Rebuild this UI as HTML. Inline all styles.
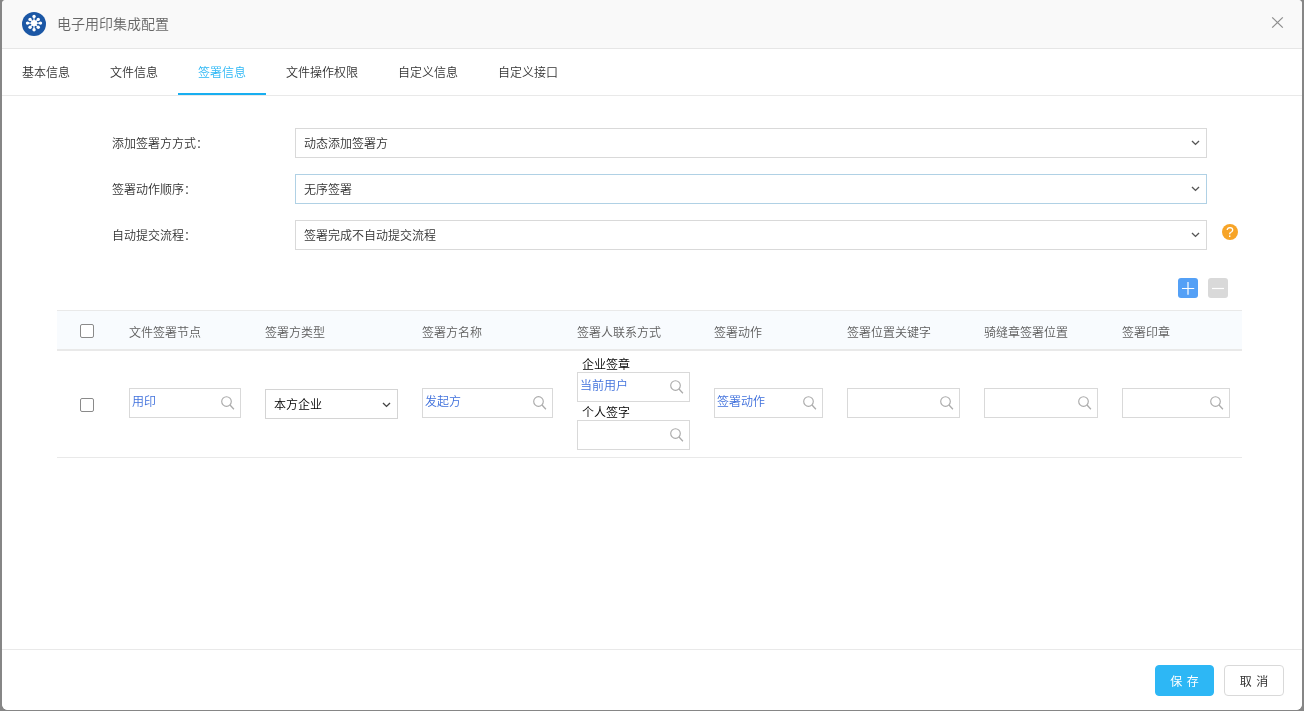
<!DOCTYPE html>
<html lang="zh-CN">
<head>
<meta charset="utf-8">
<title>电子用印集成配置</title>
<style>
*{box-sizing:border-box;margin:0;padding:0}
html,body{width:1304px;height:711px;overflow:hidden}
body{background:#868686;font-family:"Liberation Sans","Noto Sans CJK SC",sans-serif;font-size:12px;color:#333;position:relative;font-weight:350}
.dialog{will-change:transform;position:absolute;left:2px;top:0;width:1300px;height:710px;background:#fff;border-radius:4px 4px 6px 6px;overflow:hidden}
.hd{position:absolute;left:0;top:0;width:1300px;height:49px;background:#f9f9f9;border-bottom:1px solid #e6e6e6}
.hd .logo{position:absolute;left:20px;top:12px;width:24px;height:24px}
.hd .title{position:absolute;left:55px;top:0;height:48px;line-height:48px;font-size:14px;color:#666}
.hd .close{position:absolute;left:1268.5px;top:16.3px;width:13px;height:13px}
.tabs{position:absolute;left:0;top:49px;width:1300px;height:47px;border-bottom:1px solid #e9e9e9;display:flex}
.tab{height:46px;line-height:48px;padding:0 20px;color:#333;font-size:12px;position:relative;white-space:nowrap}
.tab.on{color:#2db7f5}
.tab.on:after{content:"";position:absolute;left:0;right:0;bottom:0;height:2px;background:#18aef0}
.frow{position:absolute;left:0;width:1300px;height:30px}
.frow label{position:absolute;left:110px;top:0;line-height:32px;height:30px;color:#333}
.sel{position:absolute;left:293px;top:0;width:912px;height:30px;border:1px solid #d9d9d9;background:#fff;line-height:30px;padding-left:8px;color:#333;overflow:hidden}
.sel.hl{border-color:#b0d1e5}
.chev{position:absolute;width:9px;height:6px}
.sel .chev{right:6.2px;top:11px}
.help{position:absolute;left:1220px;top:224px;width:16px;height:16px;border-radius:50%;background:#f7a427;color:#fff;font-size:14px;font-weight:400;text-align:center;line-height:16px}
.btn-sq{position:absolute;top:278px;width:20px;height:20px;border-radius:3px}
.btn-sq svg{display:block}
table.grid{position:absolute;left:55px;top:310px;width:1185px;border-collapse:separate;border-spacing:0;table-layout:fixed}
table.grid th{height:41px;background:#f8fbfe;border-top:1px solid #e9e9e9;border-bottom:2px solid #e9e9e9;text-align:left;font-weight:inherit;color:#5e5e5e;padding:2px 12px 0;white-space:nowrap}
table.grid td{height:107px;border-bottom:1px solid #e9e9e9;padding:0 12px;vertical-align:middle}
.cb{display:block;width:14px;height:14px;border:1px solid #8a8a8a;border-radius:2px;background:#fff;margin:0 auto}
td .cb{position:relative;top:1px}
.ipt{position:relative;top:-1px;height:30px;border:1px solid #d9d9d9;background:#fff;line-height:27px;padding-left:2px;color:#3f70dc}
.ipt svg{position:absolute;right:5px;top:7px}
.sel2{position:relative;height:30px;border:1px solid #d4d4d4;background:#fff;line-height:31px;padding-left:8px;color:#000;overflow:hidden}
.sel2 .chev{right:6px;top:11.5px}
.sub{color:#000;line-height:22px;padding-left:5px;height:18px}
.stack{position:relative;top:-2px}
.stack .ipt{top:0}
.ft{position:absolute;left:0;top:649px;width:1300px;height:61px;border-top:1px solid #e9e9e9;background:#fff}
.btn{position:absolute;top:15px;height:31px;width:60px;border-radius:4px;text-align:center;line-height:33px;font-size:12px;overflow:hidden;font-weight:400;word-spacing:1px}
.btn.pri{left:1153px;width:59px;background:#2db7f5;border:1px solid #2db7f5;color:#fff}
.btn.def{left:1222px;background:#fff;border:1px solid #d9d9d9;color:#333}
</style>
</head>
<body>
<div class="dialog">
  <div class="hd">
    <svg class="logo" viewBox="0 0 24 24">
      <circle cx="12" cy="12" r="12" fill="#1b57a5"/>
      <g stroke="#fff" stroke-width="1.1">
        <line x1="12" y1="4.5" x2="12" y2="17.7"/><line x1="5.5" y1="11.1" x2="18.5" y2="11.1"/>
        <line x1="8" y1="7.4" x2="16.2" y2="15.2"/><line x1="16.2" y1="7.4" x2="8" y2="15.2"/>
      </g>
      <g fill="#fff">
        <circle cx="12.05" cy="11.1" r="3.1"/>
        <circle cx="12.05" cy="4.4" r="1.7"/><circle cx="12.05" cy="17.7" r="1.7"/>
        <circle cx="5.5" cy="11.1" r="1.7"/><circle cx="18.5" cy="11.1" r="1.7"/>
        <circle cx="8.05" cy="7.4" r="1.7"/><circle cx="16.25" cy="7.4" r="1.7"/>
        <circle cx="8.05" cy="15.25" r="1.7"/><circle cx="16.25" cy="15.25" r="1.7"/>
      </g>
    </svg>
    <div class="title">电子用印集成配置</div>
    <svg class="close" viewBox="0 0 13 13"><path d="M1.2 1.4 L11.8 11.6 M11.8 1.4 L1.2 11.6" stroke="#8f8f8f" stroke-width="1.3" fill="none"/></svg>
  </div>
  <div class="tabs">
    <div class="tab">基本信息</div>
    <div class="tab">文件信息</div>
    <div class="tab on">签署信息</div>
    <div class="tab">文件操作权限</div>
    <div class="tab">自定义信息</div>
    <div class="tab">自定义接口</div>
  </div>

  <div class="frow" style="top:128px">
    <label>添加签署方方式：</label>
    <div class="sel">动态添加签署方<svg class="chev" viewBox="0 0 9 6"><path d="M1 1.1 L4.5 4.4 L8 1.1" stroke="#555" stroke-width="1.4" fill="none"/></svg></div>
  </div>
  <div class="frow" style="top:174px">
    <label>签署动作顺序：</label>
    <div class="sel hl">无序签署<svg class="chev" viewBox="0 0 9 6"><path d="M1 1.1 L4.5 4.4 L8 1.1" stroke="#555" stroke-width="1.4" fill="none"/></svg></div>
  </div>
  <div class="frow" style="top:220px">
    <label>自动提交流程：</label>
    <div class="sel">签署完成不自动提交流程<svg class="chev" viewBox="0 0 9 6"><path d="M1 1.1 L4.5 4.4 L8 1.1" stroke="#555" stroke-width="1.4" fill="none"/></svg></div>
  </div>
  <div class="help">?</div>

  <div class="btn-sq" style="left:1176px;background:#54a0f6"><svg width="20" height="20" viewBox="0 0 20 20"><path d="M10 4 V16.8 M4 10.5 H16.2" stroke="#fff" stroke-width="1.2" fill="none"/></svg></div>
  <div class="btn-sq" style="left:1206px;background:#d9d9d9"><svg width="20" height="20" viewBox="0 0 20 20"><path d="M4 10.5 H16" stroke="#fff" stroke-width="1.2" fill="none"/></svg></div>

  <table class="grid">
    <colgroup><col style="width:60px"><col style="width:136px"><col style="width:157px"><col style="width:155px"><col style="width:137px"><col style="width:133px"><col style="width:137px"><col style="width:138px"><col style="width:132px"></colgroup>
    <thead><tr>
      <th><span class="cb"></span></th><th>文件签署节点</th><th>签署方类型</th><th>签署方名称</th><th>签署人联系方式</th><th>签署动作</th><th>签署位置关键字</th><th>骑缝章签署位置</th><th>签署印章</th>
    </tr></thead>
    <tbody><tr>
      <td><span class="cb"></span></td>
      <td><div class="ipt">用印<svg width="14" height="14" viewBox="0 0 14 14"><circle cx="5.5" cy="5.5" r="4.8" stroke="#ababab" stroke-width="1.15" fill="none"/><path d="M9 9 L12.9 13.3" stroke="#ababab" stroke-width="1.3" fill="none"/></svg></div></td>
      <td><div class="sel2">本方企业<svg class="chev" viewBox="0 0 9 6"><path d="M1 1.1 L4.5 4.4 L8 1.1" stroke="#444" stroke-width="1.4" fill="none"/></svg></div></td>
      <td><div class="ipt">发起方<svg width="14" height="14" viewBox="0 0 14 14"><circle cx="5.5" cy="5.5" r="4.8" stroke="#ababab" stroke-width="1.15" fill="none"/><path d="M9 9 L12.9 13.3" stroke="#ababab" stroke-width="1.3" fill="none"/></svg></div></td>
      <td><div class="stack">
        <div class="sub">企业签章</div>
        <div class="ipt">当前用户<svg width="14" height="14" viewBox="0 0 14 14"><circle cx="5.5" cy="5.5" r="4.8" stroke="#ababab" stroke-width="1.15" fill="none"/><path d="M9 9 L12.9 13.3" stroke="#ababab" stroke-width="1.3" fill="none"/></svg></div>
        <div class="sub">个人签字</div>
        <div class="ipt"><svg width="14" height="14" viewBox="0 0 14 14"><circle cx="5.5" cy="5.5" r="4.8" stroke="#ababab" stroke-width="1.15" fill="none"/><path d="M9 9 L12.9 13.3" stroke="#ababab" stroke-width="1.3" fill="none"/></svg></div>
      </div></td>
      <td><div class="ipt">签署动作<svg width="14" height="14" viewBox="0 0 14 14"><circle cx="5.5" cy="5.5" r="4.8" stroke="#ababab" stroke-width="1.15" fill="none"/><path d="M9 9 L12.9 13.3" stroke="#ababab" stroke-width="1.3" fill="none"/></svg></div></td>
      <td><div class="ipt"><svg width="14" height="14" viewBox="0 0 14 14"><circle cx="5.5" cy="5.5" r="4.8" stroke="#ababab" stroke-width="1.15" fill="none"/><path d="M9 9 L12.9 13.3" stroke="#ababab" stroke-width="1.3" fill="none"/></svg></div></td>
      <td><div class="ipt"><svg width="14" height="14" viewBox="0 0 14 14"><circle cx="5.5" cy="5.5" r="4.8" stroke="#ababab" stroke-width="1.15" fill="none"/><path d="M9 9 L12.9 13.3" stroke="#ababab" stroke-width="1.3" fill="none"/></svg></div></td>
      <td><div class="ipt"><svg width="14" height="14" viewBox="0 0 14 14"><circle cx="5.5" cy="5.5" r="4.8" stroke="#ababab" stroke-width="1.15" fill="none"/><path d="M9 9 L12.9 13.3" stroke="#ababab" stroke-width="1.3" fill="none"/></svg></div></td>
    </tr></tbody>
  </table>

  <div class="ft">
    <div class="btn pri">保 存</div>
    <div class="btn def">取 消</div>
  </div>
</div>
</body>
</html>
